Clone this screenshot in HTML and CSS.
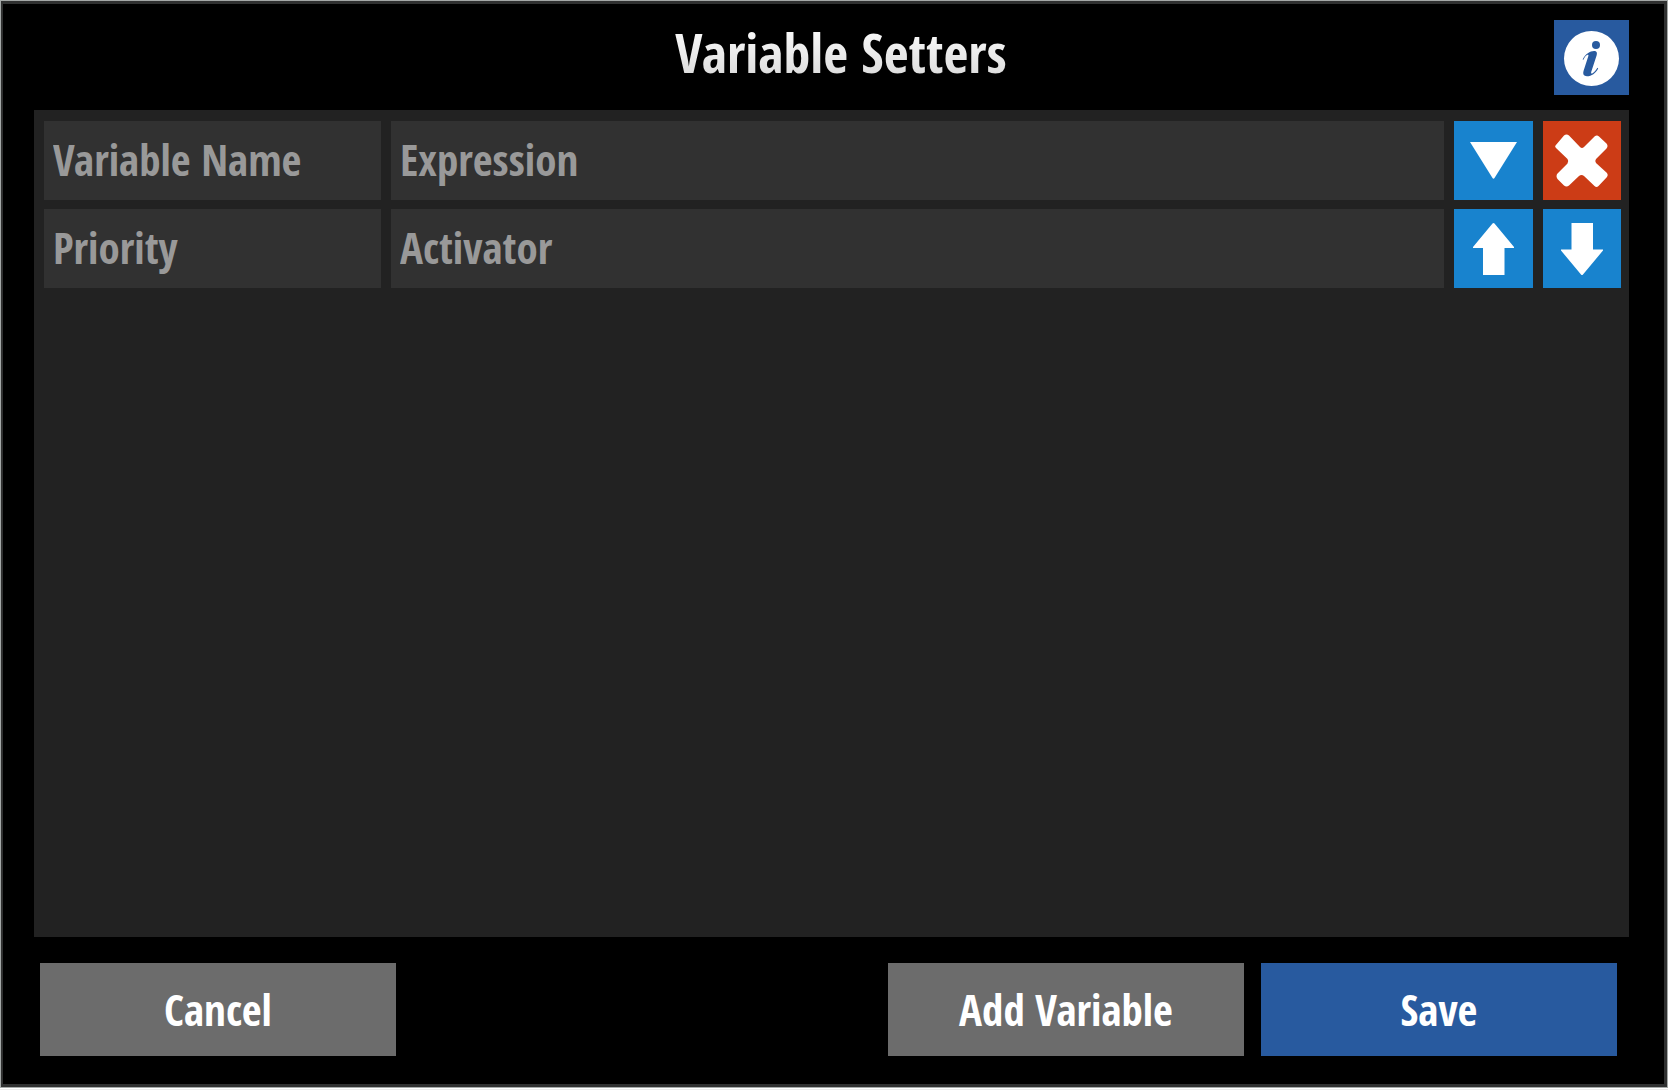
FILE: index.html
```html
<!DOCTYPE html>
<html lang="en">
<head>
<meta charset="utf-8">
<title>Variable Setters</title>
<link rel="stylesheet" href="styles.css">
</head>
<body>
<main class="dialog">
  <header class="dialog-header">
    <h1 class="title">Variable Setters</h1>
    <button class="info" type="button" aria-label="Information">
      <svg viewBox="0 0 75 75" aria-hidden="true">
        <circle cx="37.5" cy="38.5" r="27.5" fill="#fff"/>
        <circle cx="42" cy="25" r="4" fill="#285a9f"/>
        <path d="M28.6 39.4C31.5 34 36 31 40 31C42.8 31 43.4 32.8 42.6 35.4L37.2 52C36.8 53.6 37.6 53.8 38.6 53.2C40.4 52.2 42 50.2 43.4 47.8L44.2 48.4C41.6 53.2 37.6 56.2 33 56.2C29.6 56.2 28.6 54 29.6 50.8L34.2 36.6C34.8 34.8 34.2 34.4 33 35C31.6 35.8 30.4 37.6 29.4 39.8Z" fill="#285a9f"/>
      </svg>
    </button>
  </header>

  <section class="list">
    <div class="setter">
      <input class="field" type="text" placeholder="Variable Name" aria-label="Variable Name">
      <input class="field" type="text" placeholder="Expression" aria-label="Expression">
      <button class="tool" type="button" aria-label="Choose">
        <svg viewBox="0 0 79 79" aria-hidden="true"><path d="M16 21H63L40.5 57Q39.5 58.600 38.500 57Z"/></svg>
      </button>
      <button class="tool tool-delete" type="button" aria-label="Delete">
        <svg viewBox="0 0 78 79" aria-hidden="true"><path d="M12.500 24.500L21 14.500Q23.500 12.500 26 14.500L37 26Q39 28 41 26L51.500 15.500Q54 13.500 56 15.500L63.500 22.500Q65.500 25 63.500 27.500L53 38Q51.500 40 53 42L64 52Q65.500 54 64 56L55.500 65Q53.500 67 51.500 65L41 55Q38.500 53 36 55L26 64.500Q23.500 66.500 21 64.500L14.500 58Q12.500 55 14.500 52.500L24.500 42.500Q26 40 24.500 38L13 27Q11.500 25.500 12.500 24.500Z"/></svg>
      </button>
      <input class="field" type="text" placeholder="Priority" aria-label="Priority">
      <input class="field" type="text" placeholder="Activator" aria-label="Activator">
      <button class="tool" type="button" aria-label="Move up">
        <svg viewBox="0 0 79 79" aria-hidden="true"><path d="M38.500 14.500Q39.500 13.500 40.500 14.500L60 38V39H50.500V66H29V39H19V38Z"/></svg>
      </button>
      <button class="tool" type="button" aria-label="Move down">
        <svg viewBox="0 0 78 79" aria-hidden="true"><path d="M28.500 14H50V40.500H60V41.500L40 65.500Q39 66.500 38 65.500L18 41.500V40.500H28.500Z"/></svg>
      </button>
    </div>
  </section>

  <footer class="actions">
    <button class="action action-cancel" type="button">Cancel</button>
    <button class="action" type="button">Add Variable</button>
    <button class="action action-save" type="button">Save</button>
  </footer>
</main>
</body>
</html>
```
FILE: styles.css
```css
* {
  box-sizing: border-box;
}

body {
  margin: 0;
  padding-bottom: 1px;
  border-bottom: 1px solid #ececec;
  min-height: 100vh;
  display: flex;
  background: #fff;
  font-family: "Open Sans Condensed", "Roboto Condensed", "Liberation Sans Narrow", "Open Sans", sans-serif;
  font-weight: 700;
}

button,
input {
  margin: 0;
  border: 0;
  border-radius: 0;
  font: inherit;
}

button {
  padding: 0;
  cursor: pointer;
}

svg {
  display: block;
  width: 100%;
  height: 100%;
}

.dialog {
  flex: 1;
  display: flex;
  flex-direction: column;
  padding: 0 35px 28px 31px;
  border: solid #303131;
  border-width: 3px 3px 3px 2px;
  outline: 1px solid #a5a9a8;
  margin: 1px;
  background: #000;
}

.dialog-header {
  display: grid;
  grid-template-columns: 1fr auto 1fr;
  align-items: start;
  height: 106px;
  padding: 16px 0 0 19px;
}

.title {
  grid-column: 2;
  margin: 0;
  font-size: 54px;
  line-height: 64px;
  background: linear-gradient(#fff, #d8d8d8);
  background-clip: text;
  color: transparent;
}

.info {
  justify-self: end;
  width: 75px;
  height: 75px;
  background: #285a9f;
}

.list {
  flex: 1;
  padding: 11px 8px 11px 10px;
  background: #222;
}

.setter {
  display: grid;
  grid-template-columns: 337px 1fr 79px 78px;
  grid-auto-rows: 79px;
  gap: 9px 10px;
}

.field {
  width: 100%;
  min-width: 0;
  padding: 0 9px 2px;
  background: #313131;
  color: #fff;
  font-size: 43px;
}

.field::placeholder {
  color: #999;
  opacity: 1;
}

.tool {
  background: #1883ce;
  fill: #fff;
}

.tool-delete {
  background: #cc3c16;
}

.actions {
  display: flex;
  gap: 17px;
  padding: 26px 12px 0 6px;
}

.action {
  width: 356px;
  height: 93px;
  background: #6c6c6c;
  color: #fff;
  font-size: 43px;
}

.action-cancel {
  margin-right: auto;
}

.action-save {
  background: #285a9f;
}
```
